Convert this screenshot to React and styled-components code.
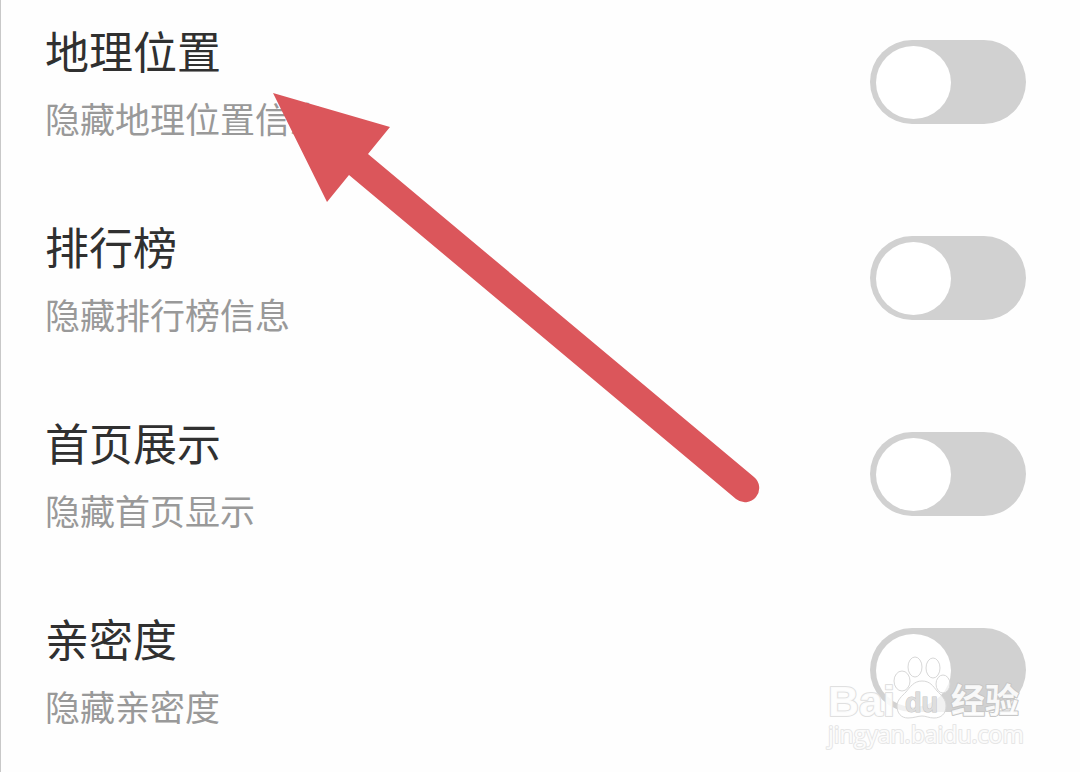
import { useState } from "react";
import styled, { createGlobalStyle } from "styled-components";

const GlobalStyle = createGlobalStyle`
  * {
    box-sizing: border-box;
  }
  body {
    margin: 0;
    background-color: #fefefe;
    font-family: "Noto Sans CJK SC", sans-serif;
  }
`;

const Page = styled.main`
  position: relative;
  min-height: 100vh;
  border-left: 1px solid #c8c8c8;
`;

const List = styled.ul`
  display: flex;
  flex-direction: column;
  gap: 74px;
  margin: 0;
  padding: 21px 54px 21px 44px;
  list-style: none;
`;

const Row = styled.li`
  display: flex;
  align-items: center;
  justify-content: space-between;
`;

const Label = styled.label`
  display: flex;
  flex-direction: column;
  gap: 14px;
  cursor: pointer;
`;

const Title = styled.span`
  color: #303030;
  font-size: 44px;
  line-height: 58px;
`;

const Detail = styled.span`
  color: #999999;
  font-size: 35px;
  line-height: 50px;
`;

const Switch = styled.input`
  appearance: none;
  display: flex;
  align-items: center;
  flex-shrink: 0;
  width: 156px;
  height: 84px;
  margin: 0;
  padding: 0 6px;
  border-radius: 42px;
  background-color: #d1d1d1;
  cursor: pointer;

  &::before {
    content: "";
    width: 75px;
    height: 73px;
    border-radius: 50%;
    background-color: #ffffff;
  }

  &:checked {
    justify-content: flex-end;
    background-color: #db565b;
  }
`;

const Arrow = styled.svg`
  position: absolute;
  top: 92px;
  left: 271px;
  pointer-events: none;
`;

const Mark = styled.svg`
  position: absolute;
  top: 652px;
  right: 52px;
  pointer-events: none;
`;

const MarkText = styled.text`
  font-family: ${({ $bold }) => ($bold ? `"Liberation Sans"` : `"Open Sans"`)},
    "Noto Sans CJK SC", sans-serif;
  font-size: ${({ $size }) => $size}px;
  font-weight: ${({ $bold }) => ($bold ? 700 : 400)};
  paint-order: stroke;
`;

const settings = [
  { id: "location", title: "地理位置", detail: "隐藏地理位置信息" },
  { id: "ranking", title: "排行榜", detail: "隐藏排行榜信息" },
  { id: "home", title: "首页展示", detail: "隐藏首页显示" },
  { id: "intimacy", title: "亲密度", detail: "隐藏亲密度" },
];

function SettingRow({ id, title, detail }) {
  const [checked, setChecked] = useState(false);

  return (
    <Row>
      <Label htmlFor={id}>
        <Title>{title}</Title>
        <Detail>{detail}</Detail>
      </Label>
      <Switch
        id={id}
        type="checkbox"
        role="switch"
        checked={checked}
        onChange={(e) => setChecked(e.target.checked)}
      />
    </Row>
  );
}

function PointerArrow() {
  return (
    <Arrow width="488" height="412" viewBox="272 92 488 412" aria-hidden="true">
      <path
        d="M273 93 390 127 368 154 754 477A14 14 0 0 1 736 499L349 175 327 202Z"
        fill="#db565b"
      />
    </Arrow>
  );
}

function Watermark() {
  return (
    <Mark width="204" height="102" viewBox="824 652 204 102" aria-label="Baidu 经验">
      <g fill="#fff" fillOpacity="0.7" stroke="#d8d8d8" strokeWidth="1">
        <ellipse cx="902" cy="681" rx="8" ry="10" />
        <ellipse cx="915" cy="667" rx="7" ry="10" />
        <ellipse cx="933" cy="668" rx="7" ry="10" />
        <ellipse cx="943" cy="684" rx="7" ry="9" />
        <path d="M922 681c8 0 11 5 15 10 4 4 9 8 9 15 0 8-5 12-12 12-5 0-8-2-12-2s-8 2-14 2c-7 0-11-5-11-12 0-6 5-10 9-14 4-5 8-11 16-11Z" />
      </g>
      <g fill="#fff" fillOpacity="0.9" stroke="#e0e0e0" strokeWidth="2" strokeLinejoin="round">
        <MarkText x="828" y="716" $size={43} $bold>
          Bai
        </MarkText>
        <MarkText x="951" y="713" $size={34} $bold stroke="#c6c6c6">
          经验
        </MarkText>
        <MarkText x="828" y="743" $size={23} stroke="#e6e6e6">
          jingyan.baidu.com
        </MarkText>
      </g>
      <MarkText x="905" y="712" $size={27} $bold fill="#dedede" stroke="#c4c4c4" strokeWidth="1">
        du
      </MarkText>
    </Mark>
  );
}

function App() {
  return (
    <Page>
      <GlobalStyle />
      <List>
        {settings.map((item) => (
          <SettingRow key={item.id} {...item} />
        ))}
      </List>
      <PointerArrow />
      <Watermark />
    </Page>
  );
}

export default App;
